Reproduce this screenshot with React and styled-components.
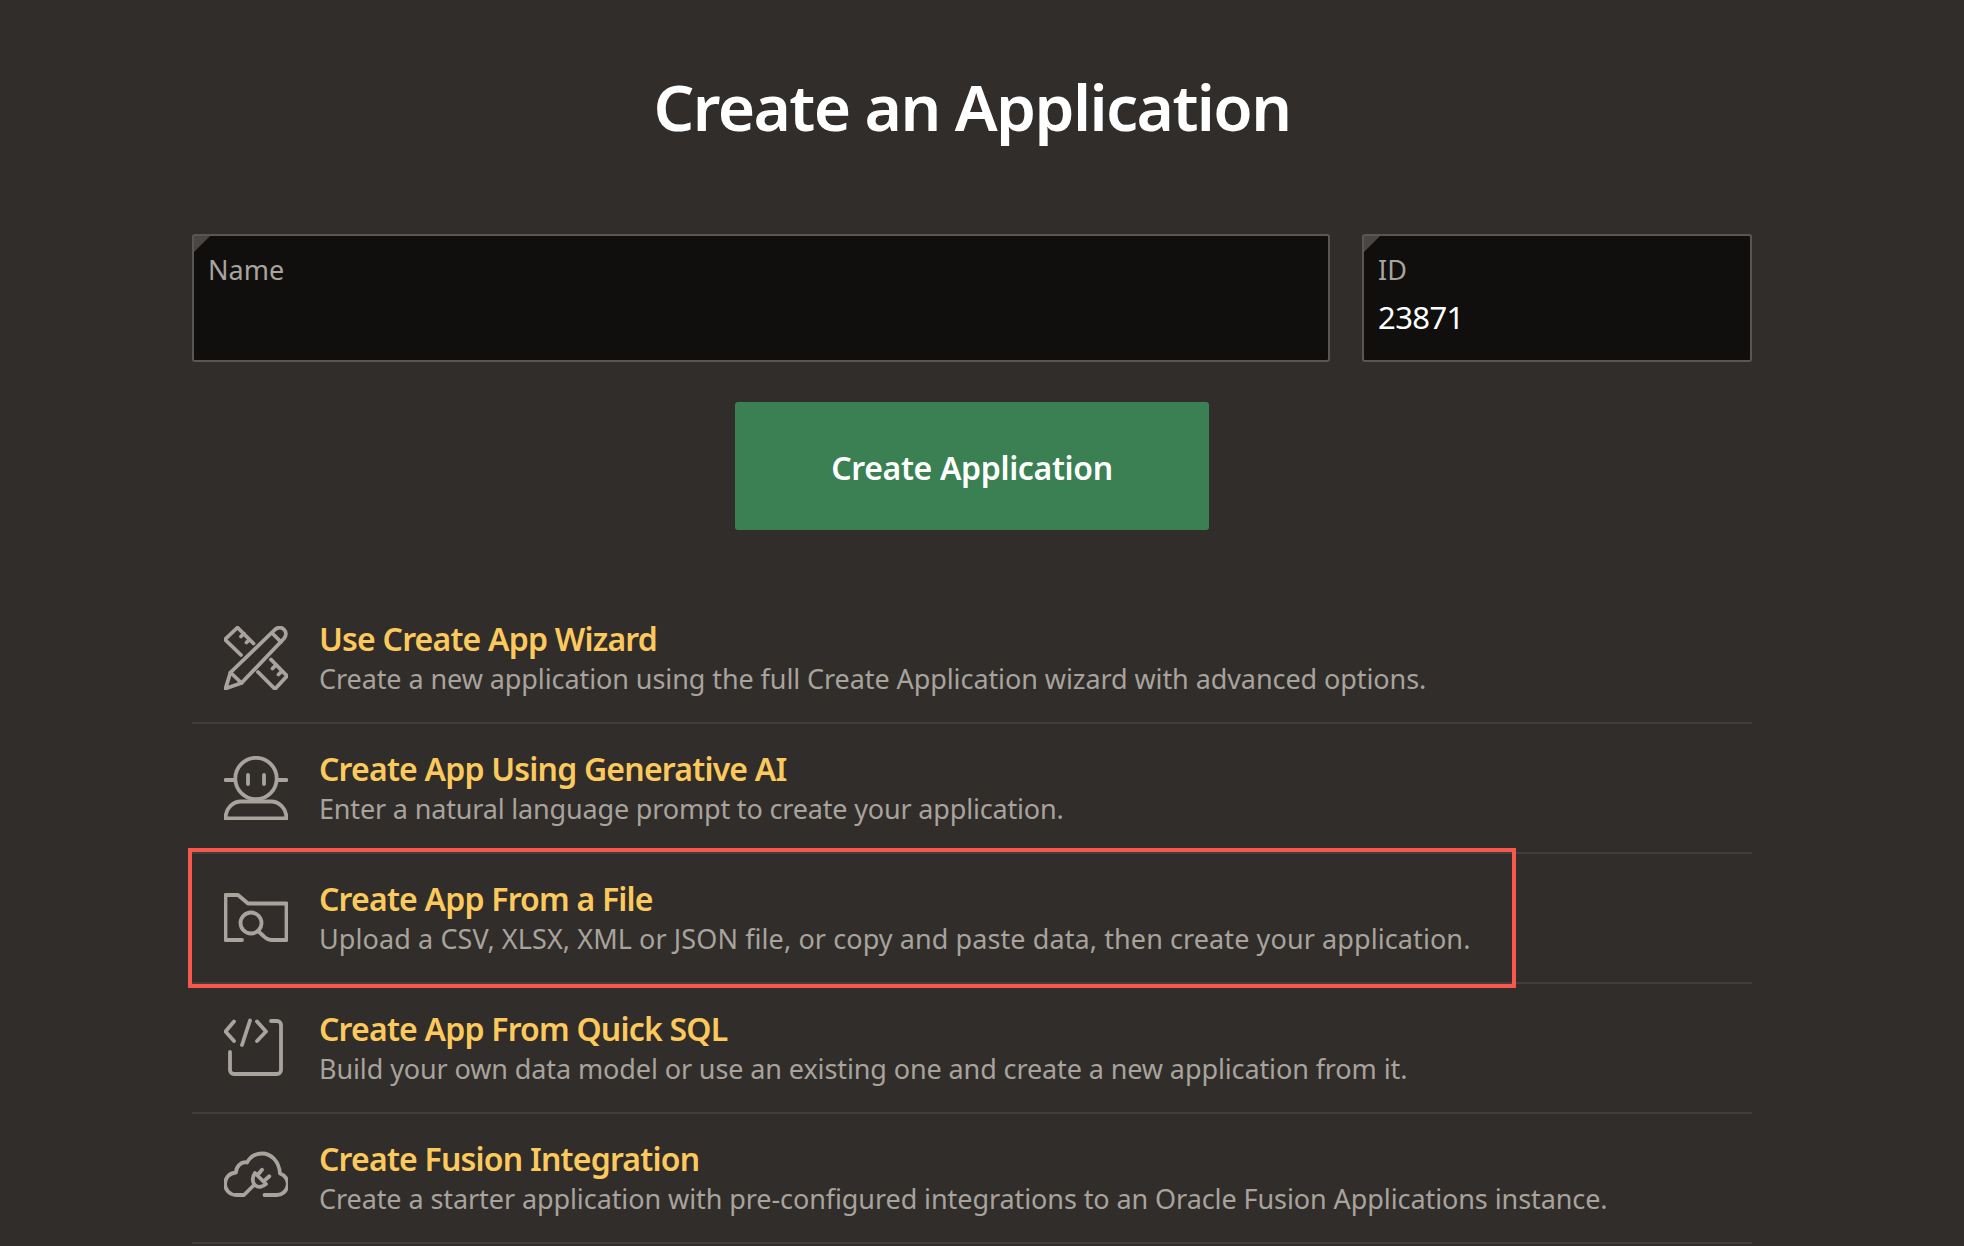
import React from 'react';
import styled, { createGlobalStyle } from 'styled-components';

const GlobalStyle = createGlobalStyle`
  html, body {
    margin: 0;
    background: #312d2a;
  }
  * {
    box-sizing: border-box;
  }
`;

const Page = styled.div`
  width: 1964px;
  height: 1246px;
  overflow: hidden;
  padding: 0 212px 0 192px;
  font-family: 'Noto Sans', sans-serif;
  background: #312d2a;
`;

const Title = styled.h1`
  margin: 0;
  padding-top: 65px;
  height: 234px;
  font-size: 64px;
  line-height: 84px;
  font-weight: 600;
  letter-spacing: -1.6px;
  text-align: center;
  color: #ffffff;
`;

const Fields = styled.div`
  display: grid;
  grid-template-columns: 1138px 390px;
  gap: 32px;
`;

const Field = styled.div`
  position: relative;
  height: 128px;
  padding: 16px 14px;
  background: #100f0d;
  border: 2px solid #5b5652;
  border-radius: 3px;
  &::before {
    content: '';
    position: absolute;
    top: 0;
    left: 0;
    border-style: solid;
    border-width: 16px 16px 0 0;
    border-color: #4a4643 transparent transparent transparent;
  }
`;

const FieldLabel = styled.div`
  font-size: 27px;
  line-height: 36px;
  color: #a8a39d;
`;

const FieldValue = styled.div`
  margin-top: 8px;
  font-size: 31px;
  line-height: 42px;
  letter-spacing: -0.6px;
  color: #ffffff;
`;

const ButtonRow = styled.div`
  display: flex;
  justify-content: center;
  padding: 40px 0 64px;
`;

const Button = styled.button`
  width: 474px;
  height: 128px;
  padding: 2px 0 0;
  border: 0;
  border-radius: 3px;
  background: #3a8053;
  color: #ffffff;
  font-family: inherit;
  font-size: 32px;
  font-weight: 600;
  letter-spacing: -0.35px;
`;

const Row = styled.div`
  position: relative;
  display: flex;
  align-items: center;
  height: 130px;
  padding-left: 32px;
  border-bottom: 2px solid #423e3b;
`;

const Highlight = styled.div`
  position: absolute;
  top: -6px;
  left: -4px;
  width: 1328px;
  height: 140px;
  border: 4px solid #f7574c;
`;

const IconBox = styled.svg`
  flex: none;
  width: 64px;
  height: 64px;
  margin-right: 31px;
  fill: none;
  stroke: #a8a39d;
  stroke-width: 3.8;
  stroke-linecap: round;
  stroke-linejoin: round;
`;

const RowTitle = styled.div`
  font-size: 32px;
  line-height: 40px;
  font-weight: 600;
  letter-spacing: -0.8px;
  color: #fcc95c;
`;

const RowText = styled.div`
  margin-top: 1px;
  font-size: 27px;
  line-height: 38px;
  letter-spacing: ${(props) => props.$tracking || '-0.085px'};
  color: #a8a39d;
`;

const WizardIcon = () => (
  <IconBox viewBox="0 0 64 64">
    <path d="M1.500 62.500 6.500 46.500 51 3.500c3-2.500 6.500-2.500 9 0s2.500 6 0 9L17.500 57z" />
    <path d="M6.500 46.500 17.500 57M48 7l9 9" />
    <path d="M17 29 1 13.500 13.500 1.500 29.500 17.500M20 7.500l-3 3M25.500 13.500l-3 3" />
    <path d="M34 46 51 63 63 50 47 33.500M52 39l-3.500 3.500M58 45l-3.500 3.500" />
  </IconBox>
);

const AiIcon = () => (
  <IconBox viewBox="0 0 64 64">
    <circle cx="32" cy="22.500" r="20.700" />
    <path d="M1.500 24H11M53 24h9.500M24 19v9M40 19v9" />
    <path d="M1.500 62.500h61C62.500 52 55 45.500 47 45.500H17C9 45.500 1.500 52 1.500 62.500z" />
  </IconBox>
);

const FileIcon = () => (
  <IconBox viewBox="0 0 64 64">
    <path d="M18 54H1.500V9H14l10 8.500h38.500V54H47c-3 0-5-1.500-7-3.500l-6-5.500" />
    <circle cx="27" cy="37" r="10.500" />
  </IconBox>
);

const CodeIcon = () => (
  <IconBox viewBox="0 0 64 64">
    <path d="M10 5.500 1.500 15.500 10 25M26 4.500 18 29M33 5.500 42 15.500 33 25" />
    <path d="M47 5h6a4 4 0 0 1 4 4v45a4 4 0 0 1-4 4H10a4 4 0 0 1-4-4V36" />
  </IconBox>
);

const FusionIcon = () => (
  <IconBox viewBox="0 0 64 64">
    <path d="M40.500 49H53a11 11 0 0 0 3-21.500C55 15 47 7.500 38 7.500c-7 0-12 3.500-15 9C17 15 12 21 12 26.500 5 27 1 32 1 38c0 6 5 11 11 11h8l10-10" />
    <path d="M31 27 42 38c-3 3-8 4-11 1s-3-8 0-12zM33.700 29l4.300-5.300M40.300 34.700l5-4.400" />
  </IconBox>
);

const rows = [
  {
    icon: WizardIcon,
    title: 'Use Create App Wizard',
    text: 'Create a new application using the full Create Application wizard with advanced options.',
  },
  {
    icon: AiIcon,
    title: 'Create App Using Generative AI',
    text: 'Enter a natural language prompt to create your application.',
    tracking: '-0.17px',
  },
  {
    icon: FileIcon,
    title: 'Create App From a File',
    text: 'Upload a CSV, XLSX, XML or JSON file, or copy and paste data, then create your application.',
    tracking: '0.09px',
    highlighted: true,
  },
  {
    icon: CodeIcon,
    title: 'Create App From Quick SQL',
    text: 'Build your own data model or use an existing one and create a new application from it.',
    tracking: '-0.11px',
  },
  {
    icon: FusionIcon,
    title: 'Create Fusion Integration',
    text: 'Create a starter application with pre-configured integrations to an Oracle Fusion Applications instance.',
  },
];

const App = () => (
  <Page>
    <GlobalStyle />
    <Title>Create an Application</Title>
    <Fields>
      <Field>
        <FieldLabel>Name</FieldLabel>
      </Field>
      <Field>
        <FieldLabel>ID</FieldLabel>
        <FieldValue>23871</FieldValue>
      </Field>
    </Fields>
    <ButtonRow>
      <Button>Create Application</Button>
    </ButtonRow>
    {rows.map(({ icon: Icon, title, text, tracking, highlighted }) => (
      <Row key={title}>
        <Icon />
        <div>
          <RowTitle>{title}</RowTitle>
          <RowText $tracking={tracking}>{text}</RowText>
        </div>
        {highlighted && <Highlight />}
      </Row>
    ))}
  </Page>
);

export default App;
